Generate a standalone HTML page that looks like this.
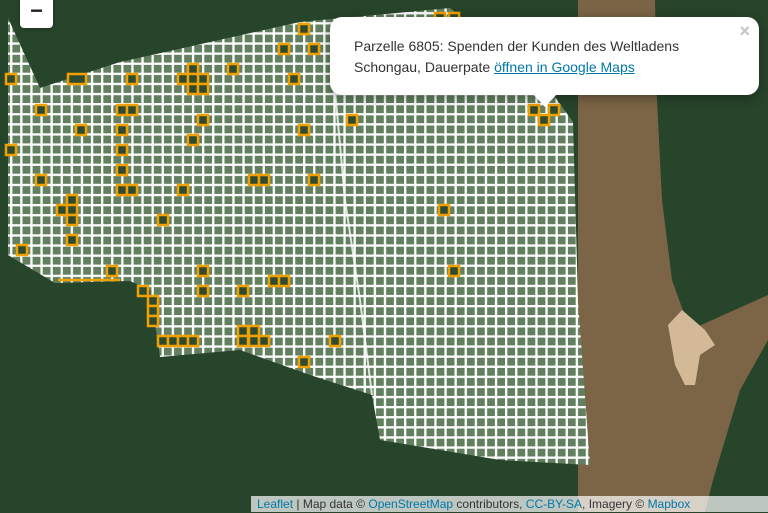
<!DOCTYPE html>
<html><head><meta charset="utf-8"><style>
html,body{margin:0;padding:0;width:768px;height:512px;overflow:hidden;background:#27452b;font-family:"Liberation Sans",sans-serif}
svg{position:absolute;left:0;top:0}
.zoom{position:absolute;left:20px;top:-4px;width:33px;height:32px;background:#fff;border-radius:4px;box-shadow:0 1px 4px rgba(0,0,0,.3);text-align:center;font-size:22px;line-height:30px;color:#222;font-weight:bold}
.popup{position:absolute;left:330px;top:17px;width:429px;height:78px;background:#fff;border-radius:12px;box-shadow:0 3px 12px rgba(0,0,0,.35)}
.popup p{margin:0;position:absolute;left:24px;top:19px;font-size:14px;line-height:21px;color:#333;width:380px}
.popup a{color:#0078a8}
.close{position:absolute;right:9px;top:4px;font-size:18px;color:#c3c3c3;font-weight:bold}
.tip{position:absolute;left:533px;top:94px;width:0;height:0;border-left:12px solid transparent;border-right:12px solid transparent;border-top:13px solid #fff}
.attr{position:absolute;left:251px;top:496px;width:517px;height:16px;background:rgba(255,255,255,.7);font-size:12px;line-height:17px;color:#333;padding-left:6px;box-sizing:border-box;white-space:nowrap}
.attr a{color:#0078a8;text-decoration:none}
</style></head><body>
<svg width="768" height="512" viewBox="0 0 768 512">
<defs>
<pattern id="g" width="10.1" height="10.1" patternUnits="userSpaceOnUse" x="0" y="2">
<rect width="10.1" height="10.1" fill="#fff"/>
<rect x="2.3" y="2.3" width="7.8" height="7.8" fill="#62805f"/>
</pattern>
</defs>
<rect width="768" height="512" fill="#27452b"/>
<path d="M578,0 L655,0 L657,100 L662,200 L672,280 L690,330 L768,295 L768,340 L740,390 L713,480 L705,512 L578,512 Z" fill="#7c6446"/>
<path d="M668,325 L682,310 L705,330 L715,345 L700,355 L695,385 L685,385 L675,365 Z" fill="#d4b998"/>
<path d="M8,18 L40,88 L120,62 L300,22 L450,8 L550,90 L573,122 L578,300 L590,465 L500,460 L380,440 L372,395 L310,375 L240,350 L160,357 L150,290 L130,281 L55,283 L8,255Z" fill="url(#g)"/>
<path d="M335,90 L345,200 L360,300 L372,395" stroke="#fff" stroke-width="2" fill="none" opacity=".8"/>
<g fill="#2e4a30" stroke="#f0a000" stroke-width="2.5">
<rect x="6" y="74" width="10" height="10"/><rect x="36" y="105" width="10" height="10"/><rect x="76" y="125" width="10" height="10"/>
<rect x="117" y="105" width="10" height="10"/><rect x="127" y="105" width="10" height="10"/><rect x="117" y="125" width="10" height="10"/>
<rect x="117" y="145" width="10" height="10"/><rect x="117" y="165" width="10" height="10"/><rect x="117" y="185" width="10" height="10"/>
<rect x="127" y="185" width="10" height="10"/><rect x="6" y="145" width="10" height="10"/><rect x="36" y="175" width="10" height="10"/>
<rect x="127" y="74" width="10" height="10"/><rect x="178" y="74" width="10" height="10"/><rect x="188" y="64" width="10" height="10"/>
<rect x="198" y="74" width="10" height="10"/><rect x="188" y="74" width="10" height="10"/><rect x="188" y="84" width="10" height="10"/>
<rect x="198" y="84" width="10" height="10"/><rect x="228" y="64" width="10" height="10"/><rect x="279" y="44" width="10" height="10"/>
<rect x="299" y="24" width="10" height="10"/><rect x="309" y="44" width="10" height="10"/><rect x="289" y="74" width="10" height="10"/>
<rect x="198" y="115" width="10" height="10"/><rect x="188" y="135" width="10" height="10"/><rect x="299" y="125" width="10" height="10"/>
<rect x="249" y="175" width="10" height="10"/><rect x="259" y="175" width="10" height="10"/><rect x="309" y="175" width="10" height="10"/>
<rect x="178" y="185" width="10" height="10"/><rect x="158" y="215" width="10" height="10"/><rect x="67" y="195" width="10" height="10"/>
<rect x="57" y="205" width="10" height="10"/><rect x="67" y="205" width="10" height="10"/><rect x="67" y="215" width="10" height="10"/>
<rect x="67" y="235" width="10" height="10"/><rect x="17" y="245" width="10" height="10"/><rect x="107" y="266" width="10" height="10"/>
<rect x="198" y="266" width="10" height="10"/><rect x="198" y="286" width="10" height="10"/><rect x="238" y="286" width="10" height="10"/>
<rect x="269" y="276" width="10" height="10"/><rect x="279" y="276" width="10" height="10"/><rect x="138" y="286" width="10" height="10"/>
<rect x="148" y="296" width="10" height="10"/><rect x="148" y="306" width="10" height="10"/><rect x="148" y="316" width="10" height="10"/>
<rect x="158" y="336" width="10" height="10"/><rect x="168" y="336" width="10" height="10"/><rect x="178" y="336" width="10" height="10"/>
<rect x="188" y="336" width="10" height="10"/><rect x="238" y="326" width="10" height="10"/><rect x="249" y="326" width="10" height="10"/>
<rect x="238" y="336" width="10" height="10"/><rect x="249" y="336" width="10" height="10"/><rect x="259" y="336" width="10" height="10"/>
<rect x="330" y="336" width="10" height="10"/><rect x="299" y="357" width="10" height="10"/><rect x="347" y="115" width="10" height="10"/>
<rect x="439" y="205" width="10" height="10"/><rect x="449" y="266" width="10" height="10"/><rect x="529" y="105" width="10" height="10"/>
<rect x="539" y="115" width="10" height="10"/><rect x="549" y="105" width="10" height="10"/><rect x="435" y="13" width="10" height="10"/>
<rect x="449" y="13" width="10" height="10"/>
<rect x="68" y="74" width="18" height="10"/>
</g>
<path d="M58,280 L120,280" stroke="#f0a000" stroke-width="2.5"/>
</svg>
<div class="zoom">−</div>
<div class="popup"><p>Parzelle 6805: Spenden der Kunden des Weltladens Schongau, Dauerpate <a href="#">öffnen in Google Maps</a></p><span class="close">×</span></div>
<div class="tip"></div>
<div class="attr"><a href="#">Leaflet</a> | Map data © <a href="#">OpenStreetMap</a> contributors, <a href="#">CC-BY-SA</a>, Imagery © <a href="#">Mapbox</a></div>
</body></html>
